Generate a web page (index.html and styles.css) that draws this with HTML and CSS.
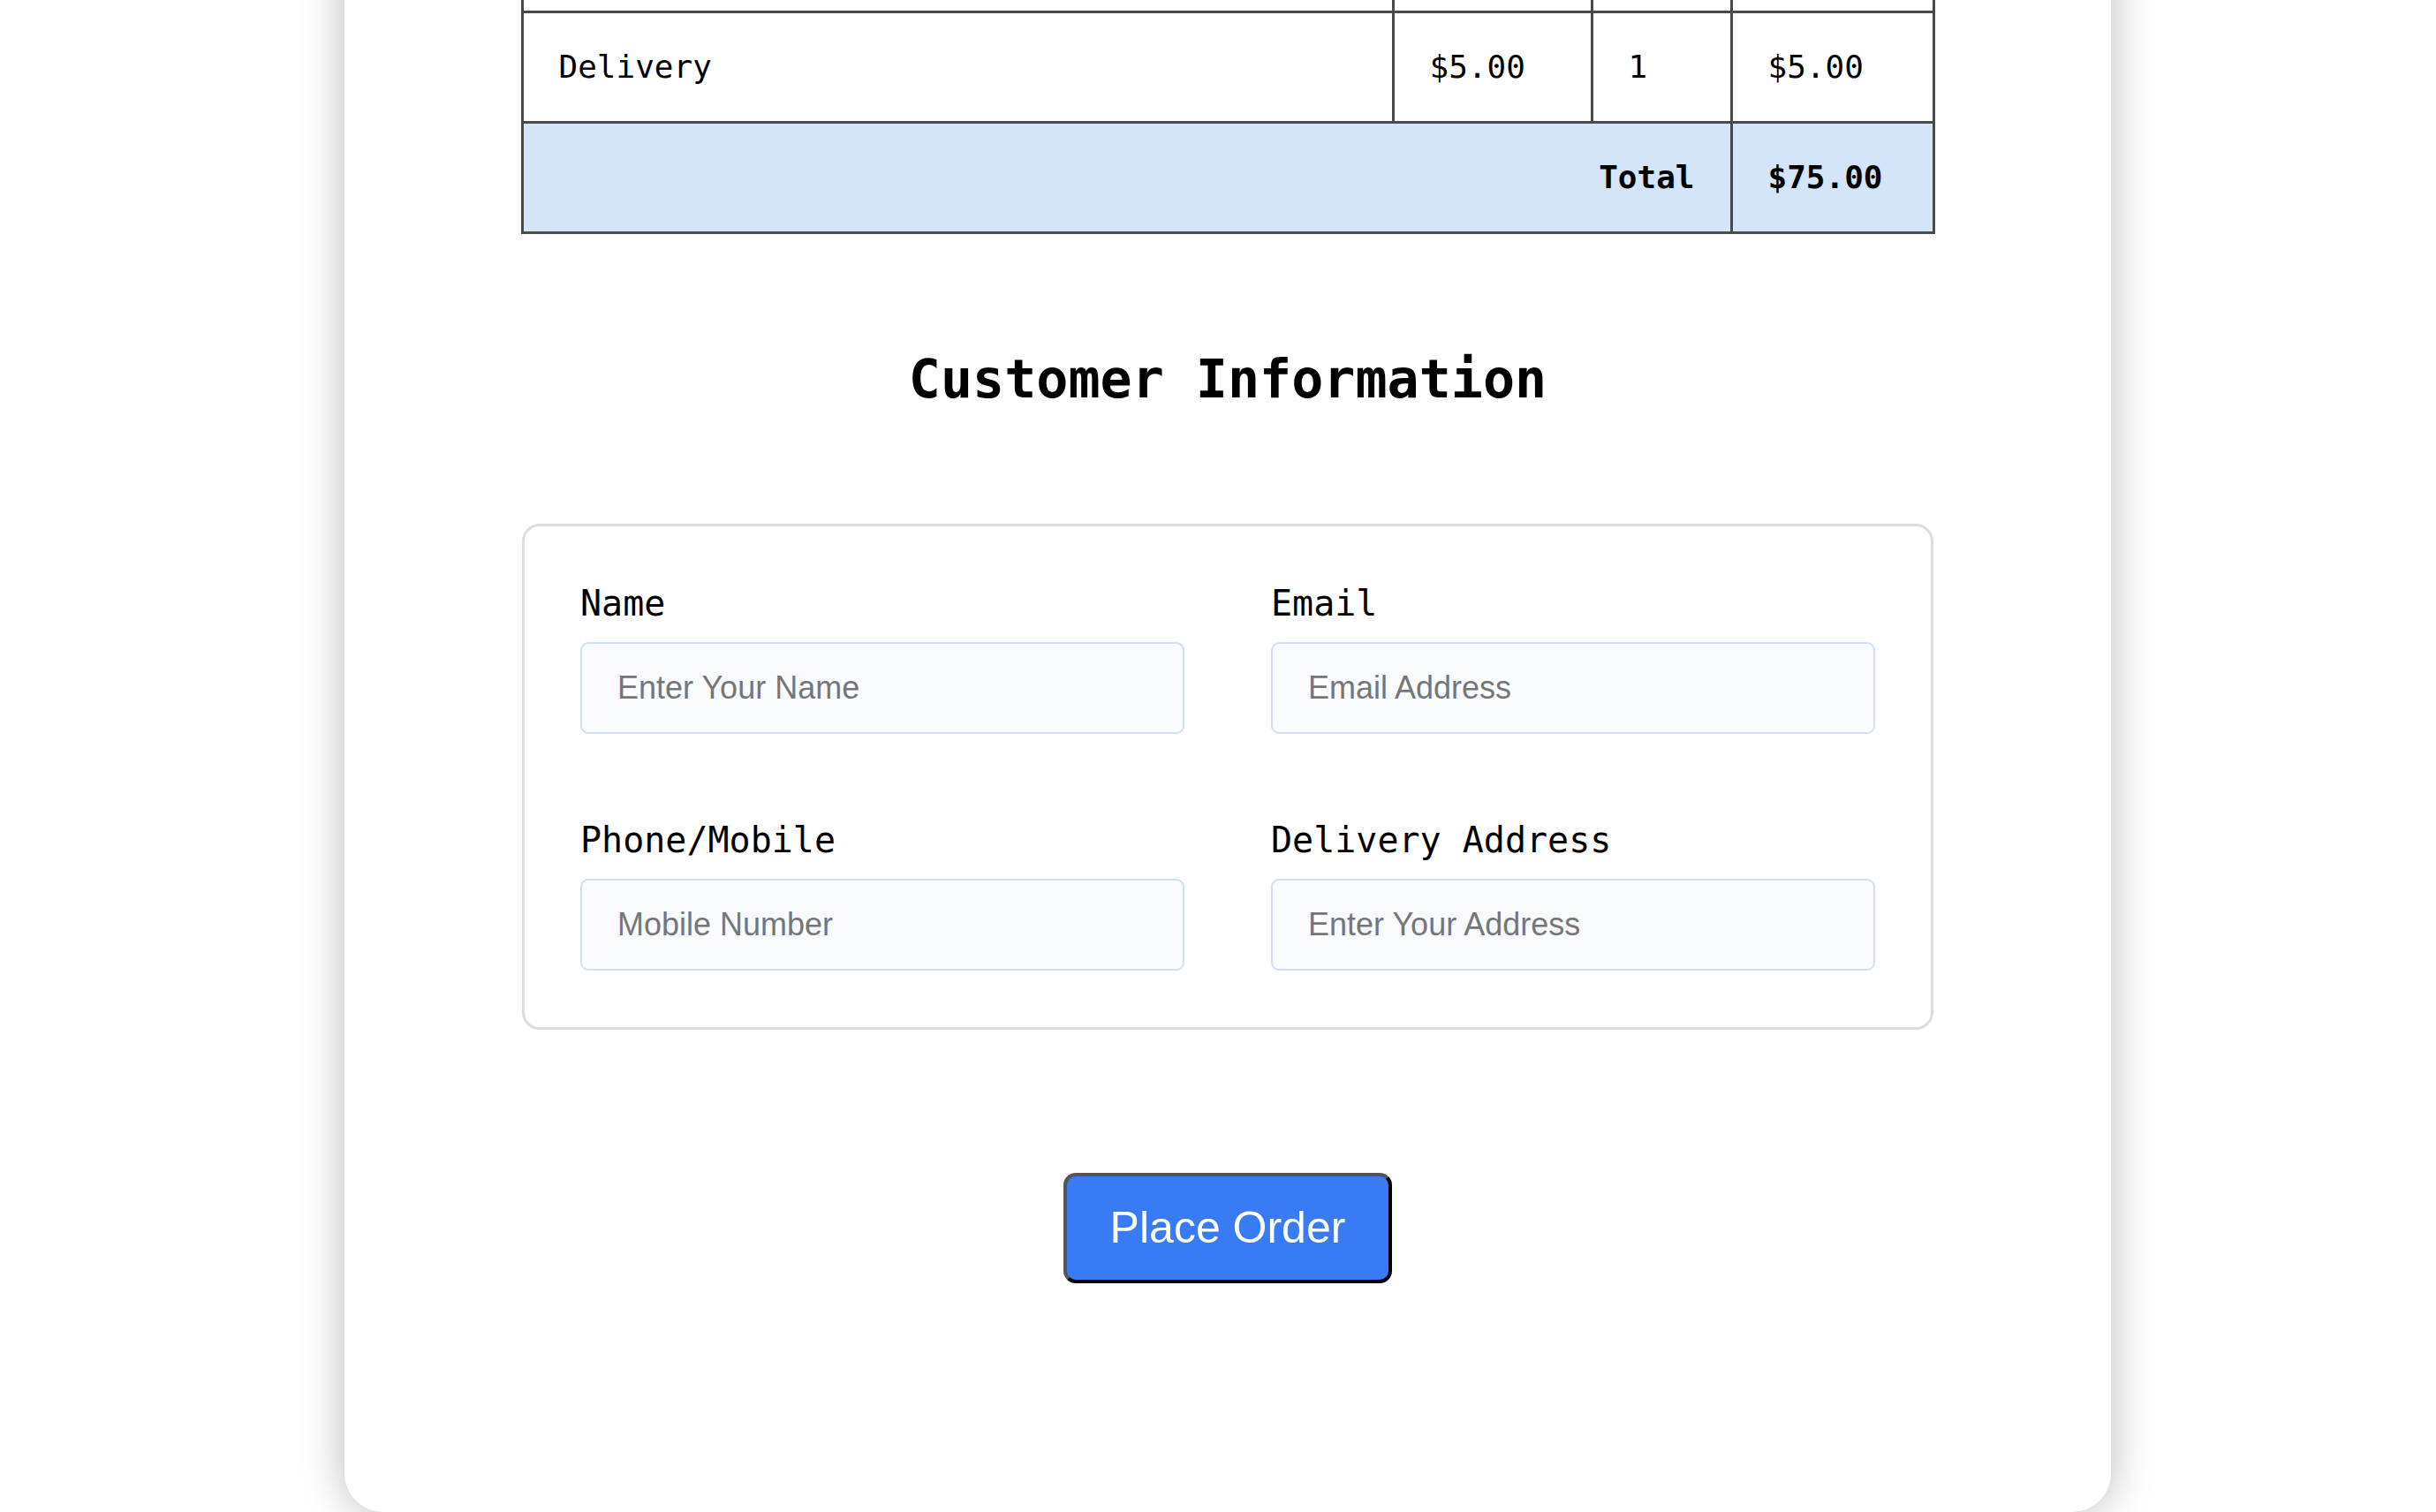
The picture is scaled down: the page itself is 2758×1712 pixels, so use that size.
FILE: index.html
```html
<!DOCTYPE html>
<html lang="en">
<head>
<meta charset="utf-8">
<title>Checkout</title>
<link rel="stylesheet" href="styles.css">
</head>
<body>
<main class="card">
  <h2 class="section-title">Order Summary</h2>
  <table class="order-table">
    <colgroup>
      <col class="col-item">
      <col class="col-price">
      <col class="col-qty">
      <col class="col-sub">
    </colgroup>
    <thead>
      <tr><th>Item</th><th>Price</th><th>Qty</th><th>Subtotal</th></tr>
    </thead>
    <tbody>
      <tr><td>Margherita Pizza</td><td>$20.00</td><td>2</td><td>$40.00</td></tr>
      <tr><td>Pasta Alfredo</td><td>$15.00</td><td>2</td><td>$30.00</td></tr>
      <tr><td>Delivery</td><td>$5.00</td><td>1</td><td>$5.00</td></tr>
      <tr class="total-row"><td colspan="3" class="total-label">Total</td><td>$75.00</td></tr>
    </tbody>
  </table>

  <h2 class="section-title customer-title">Customer Information</h2>

  <form class="customer-form">
    <div class="field">
      <label class="field-label" for="name">Name</label>
      <input class="field-input" id="name" type="text" placeholder="Enter Your Name">
    </div>
    <div class="field">
      <label class="field-label" for="email">Email</label>
      <input class="field-input" id="email" type="email" placeholder="Email Address">
    </div>
    <div class="field">
      <label class="field-label" for="phone">Phone/Mobile</label>
      <input class="field-input" id="phone" type="tel" placeholder="Mobile Number">
    </div>
    <div class="field">
      <label class="field-label" for="address">Delivery Address</label>
      <input class="field-input" id="address" type="text" placeholder="Enter Your Address">
    </div>
  </form>

  <div class="actions">
    <button class="place-order" type="button">Place Order</button>
  </div>
</main>
<script src="script.js"></script>
</body>
</html>
```

FILE: styles.css
```css
html {
  background: #ffffff;
}

body {
  margin: 0;
  background: #ffffff;
  font-family: "DejaVu Sans Mono", monospace;
  color: #000000;
}

.card {
  width: 2000px;
  margin-left: 390px;
  box-sizing: border-box;
  padding: 60px 0 259px;
  background: #ffffff;
  border-radius: 44px;
  box-shadow: 0 0 48px rgba(0, 0, 0, 0.28);
}

.section-title {
  margin: 0 0 100px;
  font-family: "DejaVu Sans Mono", monospace;
  font-size: 60px;
  line-height: 70px;
  font-weight: bold;
  text-align: center;
}

.customer-title {
  margin: 129px 0 129px;
}

.order-table {
  width: 1598px;
  margin: 0 auto;
  border-collapse: collapse;
  table-layout: fixed;
  font-family: "DejaVu Sans Mono", monospace;
  font-size: 36px;
  line-height: 42px;
}

.col-item { width: 986px; }
.col-price { width: 225px; }
.col-qty { width: 158px; }
.col-sub { width: 229px; }

.order-table th,
.order-table td {
  border: 3px solid #4a4a4a;
  padding: 40px 40px;
  text-align: left;
  white-space: nowrap;
}

.order-table th {
  font-weight: bold;
  background: #d4e4f9;
}

.total-row td {
  background: #d4e4f9;
  font-weight: bold;
}

.order-table .total-label {
  text-align: right;
}

.customer-form {
  width: 1598px;
  margin: 0 auto;
  box-sizing: border-box;
  border: 3px solid #dddddd;
  border-radius: 20px;
  padding: 64px 63px;
  display: grid;
  grid-template-columns: 1fr 1fr;
  column-gap: 98px;
  row-gap: 97px;
}

.field {
  display: flex;
  flex-direction: column;
  gap: 21px;
}

.field-label {
  font-family: "DejaVu Sans Mono", monospace;
  font-size: 40px;
  line-height: 46px;
  color: #000000;
}

.field-input {
  box-sizing: border-box;
  width: 100%;
  height: 104px;
  margin: 0;
  padding: 30px 40px;
  border: 2px solid #cfdff8;
  border-radius: 9px;
  background: #f9fbff;
  font-family: "Liberation Sans", Arial, sans-serif;
  font-size: 36px;
  line-height: 40px;
  color: #222222;
  outline: none;
}

.field-input::placeholder {
  color: #767676;
}

.actions {
  display: flex;
  justify-content: center;
  margin-top: 162px;
}

.place-order {
  margin: 0;
  padding: 29px 49px;
  border: 4px solid;
  border-color: #555555 #000000 #000000 #555555;
  border-radius: 14px;
  background: #387bf5;
  color: #ffffff;
  font-family: "Liberation Sans", Arial, sans-serif;
  font-size: 50px;
  line-height: 59px;
  cursor: pointer;
}
```

FILE: script.js
```js
window.scrollTo(0, document.documentElement.scrollHeight);
```
